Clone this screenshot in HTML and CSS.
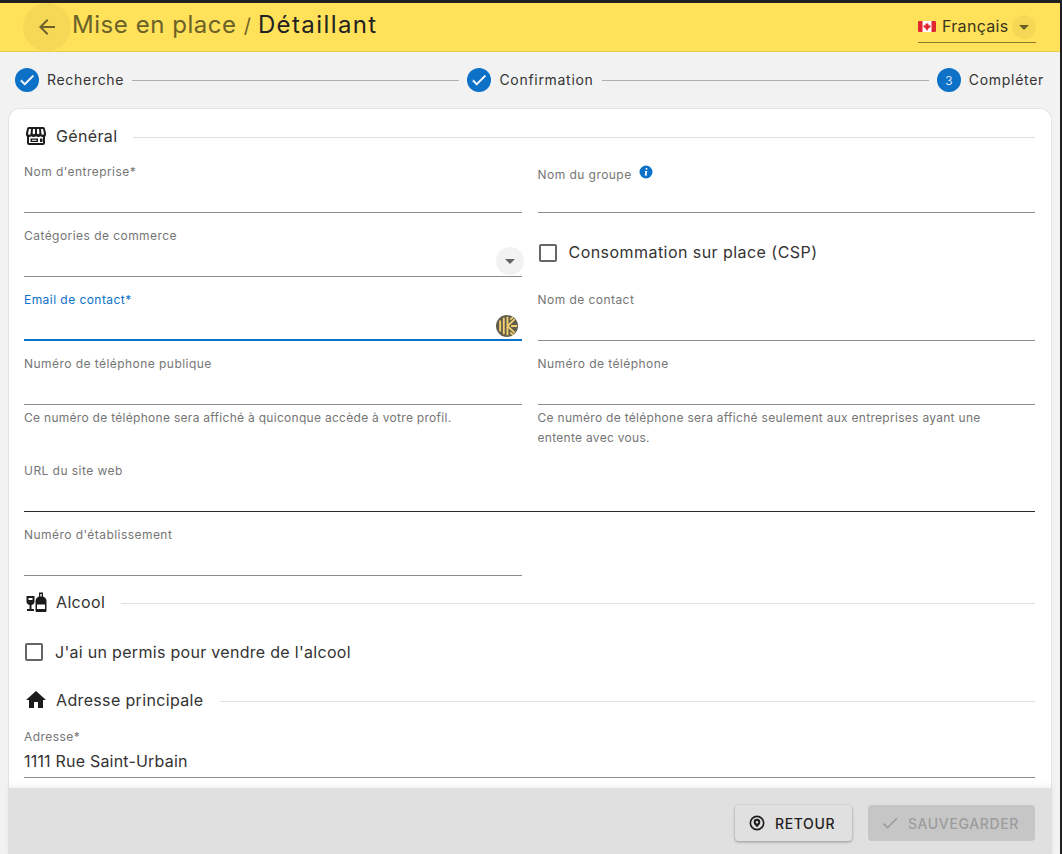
FILE: index.html
```html
<!DOCTYPE html>
<html lang="fr">
<head>
<meta charset="utf-8">
<title>Mise en place / Détaillant</title>
<link rel="stylesheet" href="styles.css">
</head>
<body>
<div class="window">
  <header class="topbar">
    <button class="back" type="button" aria-label="Retour">
      <svg class="back-icon" viewBox="0 0 24 24"><path d="M20 11H7.83l5.59-5.59L12 4l-8 8 8 8 1.41-1.41L7.83 13H20v-2z"/></svg>
    </button>
    <h1 class="title"><span class="title-muted">Mise en place</span><span class="title-slash">/</span><span class="title-main">Détaillant</span></h1>
    <div class="lang">
      <svg class="flag" viewBox="0 0 18 13"><rect y="1" width="18" height="11" rx="1" fill="#fff"/><path d="M0 2a1 1 0 0 1 1-1h3.500v11H1a1 1 0 0 1-1-1zM13.500 1H17a1 1 0 0 1 1 1v9a1 1 0 0 1-1 1h-3.500z" fill="#e0262e"/><path d="M9 2.600l.8 1.500.8-.4-.3 2 1-.9.3.7 1-.2-.4 1.300.5.300L10 8.800l.2 1H9.300v1.100h-.6V9.800h-.9l.2-1L5.300 6.900l.5-.3-.4-1.300 1 .2.300-.7 1 .9-.3-2 .8.4z" fill="#e0262e"/></svg>
      <span class="lang-name">Français</span>
      <span class="lang-btn"><svg class="drop" viewBox="0 0 24 24"><path d="M7 10l5 5 5-5z"/></svg></span>
    </div>
  </header>

  <nav class="stepper">
    <span class="step-dot"><svg class="step-check" viewBox="0 0 24 24"><path d="M9 16.170L4.830 12l-1.420 1.410L9 19 21 7l-1.410-1.410z"/></svg></span>
    <span class="step-label">Recherche</span>
    <span class="step-line"></span>
    <span class="step-dot"><svg class="step-check" viewBox="0 0 24 24"><path d="M9 16.170L4.830 12l-1.420 1.410L9 19 21 7l-1.410-1.410z"/></svg></span>
    <span class="step-label">Confirmation</span>
    <span class="step-line"></span>
    <span class="step-dot step-num">3</span>
    <span class="step-label">Compléter</span>
  </nav>

  <main class="card">
    <div class="section">
      <svg class="section-icon" viewBox="0 0 24 24"><path fill-rule="evenodd" d="M5 3h14a2 2 0 0 1 1.900 1.400L22 9v1.500a3 3 0 0 1-1 2.200V19a2 2 0 0 1-2 2H5a2 2 0 0 1-2-2v-6.300a3 3 0 0 1-1-2.200V9l1.100-4.600A2 2 0 0 1 5 3zm0 2L4 9.500a1.300 1.300 0 0 0 2.600 0L7 5zm4 0l-.4 4.500a1.400 1.400 0 0 0 2.400 0V5zm4 0v4.500a1.400 1.400 0 0 0 2.400 0L15 5zm4 0l.4 4.500a1.300 1.300 0 0 0 2.600 0L19 5zM5 13v6h14v-6a3.500 3.500 0 0 1-2.700-.8 3.500 3.500 0 0 1-4.300.1 3.500 3.500 0 0 1-4.300-.1A3.500 3.500 0 0 1 5 13zm1.500 1.500h7.500v3.500H6.500zm1.500 1.200v1.100h4.500v-1.100zm8-1.200h2.500v3.500H16z"/></svg>
      <span class="section-name">Général</span>
      <span class="section-line"></span>
    </div>

    <div class="form-grid">
      <div class="field"><label class="label">Nom d'entreprise*</label><div class="input"></div></div>
      <div class="field"><label class="label label-low">Nom du groupe<svg class="info" viewBox="0 0 14 14"><circle cx="7" cy="7" r="6.500" fill="#0d71c8"/><path d="M7.500 3a.9.9 0 1 1-.01 0zM6 6h2.300l-.8 3.800h.8l-.2.8H5.600l.8-3.800H5.800z" fill="#fff"/></svg></label><div class="input"></div></div>

      <div class="field"><label class="label">Catégories de commerce</label><div class="input"></div>
        <span class="select-btn"><svg class="drop" viewBox="0 0 24 24"><path d="M7 10l5 5 5-5z"/></svg></span>
      </div>
      <div class="check-cell"><span class="box"></span><span class="check-text">Consommation sur place (CSP)</span></div>

      <div class="field"><label class="label label-focus">Email de contact*</label><div class="input input-focus"></div>
        <svg class="keeper" viewBox="0 0 24 24"><circle cx="12" cy="12" r="12" fill="#625d4c"/><g fill="none" stroke="#f2d06e" stroke-width="2"><path d="M4.500 6v12M8.500 3v18M12.500 2v20"/><path d="M12.500 12l8-7.500M12.500 12l8 7.500M16.500 12H23M15.500 5l3-2.500M15.500 19l3 2.500"/></g></svg>
      </div>
      <div class="field"><label class="label">Nom de contact</label><div class="input"></div></div>

      <div class="field field-help"><label class="label">Numéro de téléphone publique</label><div class="input"></div>
        <p class="help">Ce numéro de téléphone sera affiché à quiconque accède à votre profil.</p></div>
      <div class="field field-help"><label class="label">Numéro de téléphone</label><div class="input"></div>
        <p class="help">Ce numéro de téléphone sera affiché seulement aux entreprises ayant une entente avec vous.</p></div>

      <div class="field field-wide"><label class="label">URL du site web</label><div class="input input-dark"></div></div>

      <div class="field"><label class="label">Numéro d'établissement</label><div class="input"></div></div>
    </div>

    <div class="section section-gap">
      <svg class="section-icon" viewBox="0 0 24 24"><path d="M2.500 6h8v5.500a3.500 3.500 0 0 1-3 3.400V19H10v2H3v-2h2.500v-4.100a3.500 3.500 0 0 1-3-3.400zm2 2v2h4V8z" fill-rule="evenodd"/><path fill-rule="evenodd" d="M15 2.500h4v4.100c2 .8 3.500 2.300 3.500 4.400V21a1 1 0 0 1-1 1H12.500a1 1 0 0 1-1-1V11c0-2.100 1.500-3.600 3.500-4.400zM16.300 4v2.400h1.400V4zM13 14.500v4.500h8v-4.500z"/></svg>
      <span class="section-name">Alcool</span>
      <span class="section-line"></span>
    </div>
    <div class="check-row"><span class="box"></span><span class="check-text check-text-tight">J'ai un permis pour vendre de l'alcool</span></div>

    <div class="section section-address">
      <svg class="section-icon" viewBox="0 0 24 24"><path d="M10 20v-6h4v6h5v-8h3L12 3 2 12h3v8z"/></svg>
      <span class="section-name">Adresse principale</span>
      <span class="section-line"></span>
    </div>
    <div class="field"><label class="label">Adresse*</label><div class="input input-value">1111 Rue Saint-Urbain</div></div>
  </main>

  <footer class="actions">
    <button class="btn btn-back" type="button">
      <svg class="btn-icon" viewBox="0 0 24 24"><path fill-rule="evenodd" d="M12 3a9 9 0 1 1 0 18 9 9 0 0 1 0-18zm0 2a7 7 0 1 0 0 14 7 7 0 0 0 0-14zm0 2a4 4 0 0 1 4 4c0 2.300-2.500 4.800-4 6-1.500-1.200-4-3.700-4-6a4 4 0 0 1 4-4zm0 2.500a1.500 1.500 0 1 0 0 3 1.500 1.500 0 0 0 0-3z"/></svg>
      <span>RETOUR</span>
    </button>
    <button class="btn btn-save" type="button" disabled>
      <svg class="btn-icon" viewBox="0 0 24 24"><path d="M9 16.170L4.830 12l-1.420 1.410L9 19 21 7l-1.410-1.410z"/></svg>
      <span>SAUVEGARDER</span>
    </button>
  </footer>
</div>
</body>
</html>
```

FILE: styles.css
```css
* { box-sizing: border-box; }

html, body {
  margin: 0;
  height: 854px;
  overflow: hidden;
  background: #1f1f1f;
}

body {
  font-family: Inter, "Liberation Sans", sans-serif;
  padding: 3px 2px 0 0;
  color: #2b2b2b;
}

.window {
  height: 851px;
  display: flex;
  flex-direction: column;
  background: #f2f2f2;
  overflow: hidden;
}

/* Header */
.topbar {
  flex: none;
  height: 49px;
  display: flex;
  align-items: center;
  padding: 0 24px 0 23px;
  background: #ffe15a;
  border-bottom: 1px solid #e6cb55;
}

.back {
  flex: none;
  width: 48px;
  height: 48px;
  display: flex;
  align-items: center;
  justify-content: center;
  padding: 0;
  border: 0;
  border-radius: 50%;
  background: rgba(0, 0, 0, 0.04);
}

.back-icon { width: 24px; height: 24px; fill: #6d6128; }

.title {
  display: flex;
  align-items: baseline;
  margin: 0 0 3px 1px;
  font-size: 24px;
  font-weight: 400;
  line-height: 32px;
}

.title-muted { color: #6b6129; letter-spacing: 0.55px; }
.title-slash { margin: 0 7px; color: #6b6129; font-size: 20px; }
.title-main { color: #222; letter-spacing: 1.4px; }

.lang {
  margin-left: auto;
  width: 118px;
  height: 30px;
  display: flex;
  align-items: center;
  border-bottom: 1px solid #8a7b35;
  margin-top: 1px;
}

.flag { flex: none; width: 18px; height: 13px; margin-bottom: 2px; }
.lang-name { margin-left: 6px; padding-bottom: 2px; font-size: 16px; color: #3a3520; letter-spacing: 0.3px; white-space: nowrap; }

.lang-btn {
  margin-left: auto;
  width: 24px;
  height: 24px;
  display: flex;
  align-items: center;
  justify-content: center;
  border-radius: 50%;
  background: rgba(0, 0, 0, 0.04);
}

.lang-btn .drop { fill: #6d6128; }
.drop { width: 24px; height: 24px; fill: #666; }

/* Stepper */
.stepper {
  flex: none;
  height: 56px;
  display: flex;
  align-items: center;
  gap: 8px;
  padding: 0 16px 0 15px;
}

.step-dot {
  flex: none;
  width: 24px;
  height: 24px;
  display: flex;
  align-items: center;
  justify-content: center;
  border-radius: 50%;
  background: #0d71c8;
  color: #fff;
}

.step-check { width: 18px; height: 18px; fill: #fff; stroke: #fff; stroke-width: 0.8; }
.step-num { font-size: 12px; font-weight: 300; }
.step-label { padding-bottom: 1px; font-size: 14px; color: #333; letter-spacing: 0.7px; white-space: nowrap; }
.step-line { flex: 1; height: 1px; background: #b0b0b0; }

/* Card */
.card {
  flex: 1;
  min-height: 0;
  margin: 0 8px;
  padding: 14px 16px 0 15px;
  overflow: hidden;
  background: #fff;
  border: 1px solid #e4e4e4;
  border-width: 1px 1px 0;
  border-radius: 12px 12px 0 0;
}

.section {
  height: 26px;
  display: flex;
  align-items: center;
}

.section-gap { margin-top: 13px; }
.section-address { margin-bottom: 1px; }

.section-icon { flex: none; width: 24px; height: 24px; fill: #1c1c1c; }
.section-name { margin-left: 8px; font-size: 16px; color: #333; letter-spacing: 0.35px; white-space: nowrap; }
.section-line { flex: 1; height: 1px; margin: 2px 0 0 16px; background: #e0e0e0; }

.form-grid {
  display: grid;
  grid-template-columns: 1fr 1fr;
  column-gap: 16px;
}

.field {
  position: relative;
  height: 64px;
  display: flex;
  flex-direction: column;
  padding-top: 15px;
}

.field-help { height: auto; }
.field-wide { grid-column: 1 / -1; }

.label {
  flex: none;
  height: 16px;
  font-size: 12px;
  line-height: 16px;
  color: #757575;
  letter-spacing: 0.45px;
  white-space: nowrap;
}

.label-low {
  display: flex;
  align-items: center;
  position: relative;
  top: 3px;
}

.label-focus { color: #0d71c8; }

.info { flex: none; width: 14px; height: 14px; margin: -6px 0 0 7px; }

.input {
  flex: 1;
  min-height: 33px;
  border-bottom: 1px solid #8c8c8c;
}

.input-dark { border-bottom-color: #2b2b2b; }
.input-focus { border-bottom: 2px solid #0d71c8; }

.input-value {
  font-size: 16px;
  line-height: 32px;
  color: #333;
  letter-spacing: 0.2px;
}

.select-btn {
  position: absolute;
  right: -2px;
  bottom: 2px;
  width: 28px;
  height: 28px;
  display: flex;
  align-items: center;
  justify-content: center;
  border-radius: 50%;
  background: #f2f2f2;
}

.keeper {
  position: absolute;
  right: 4px;
  bottom: 4px;
  width: 22px;
  height: 22px;
}

.help {
  margin: 0;
  padding: 3px 40px 0 0;
  font-size: 12px;
  line-height: 20px;
  color: #757575;
  letter-spacing: 0.29px;
  min-height: 43px;
}

.check-cell,
.check-row {
  display: flex;
  align-items: center;
  gap: 12px;
}

.check-cell { padding: 15px 0 0 1px; height: 64px; }
.check-row { height: 72px; padding: 2px 0 0 1px; }

.box {
  flex: none;
  width: 18px;
  height: 18px;
  border: 2px solid #666;
  border-radius: 2px;
}

.check-text { padding-bottom: 1px; font-size: 16px; color: #333; letter-spacing: 0.45px; white-space: nowrap; }
.check-text-tight { letter-spacing: 0.3px; }

/* Footer */
.actions {
  flex: none;
  height: 66px;
  margin: 0 8px;
  display: flex;
  justify-content: flex-end;
  gap: 16px;
  padding: 17px 17px 0 0;
  background: #e0e0e0;
  box-shadow: 0 -2px 6px rgba(0, 0, 0, 0.06);
  position: relative;
}

.btn {
  height: 36px;
  display: flex;
  align-items: center;
  gap: 8px;
  padding: 0 16px 0 12px;
  border: 0;
  border-radius: 4px;
  font-family: inherit;
  font-size: 14px;
  font-weight: 500;
  letter-spacing: 0.62px;
}

.btn-icon { width: 20px; height: 20px; }

.btn-back {
  width: 117px;
  color: #1f1f1f;
  background: #e0e0e0;
  box-shadow: 0 1px 3px rgba(0, 0, 0, 0.35);
}

.btn-back .btn-icon { fill: #1f1f1f; }

.btn-save {
  width: 167px;
  color: #9c9c9c;
  background: #c6c6c6;
}

.btn-save .btn-icon { fill: #9c9c9c; }
```
